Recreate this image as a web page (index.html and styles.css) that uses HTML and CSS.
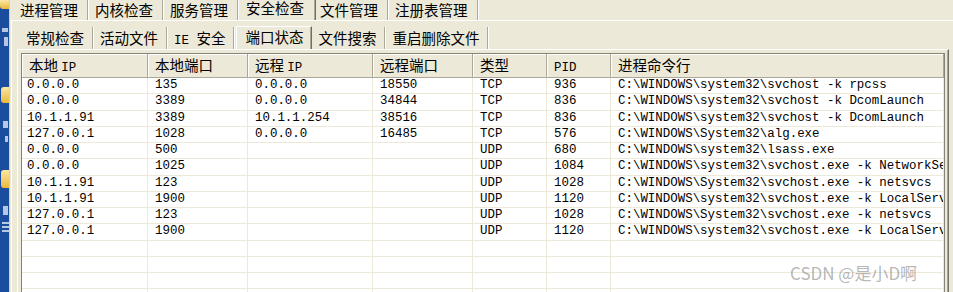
FILE: index.html
```
<!DOCTYPE html>
<html lang="zh-CN">
<head>
<meta charset="utf-8">
<title>端口状态</title>
<link rel="stylesheet" href="styles.css">
</head>
<body>
<div class="screen">
  <div class="desktop">
    <span class="folder f1"></span>
    <span class="mark m1"></span>
    <span class="mark m2"></span>
    <span class="folder f2"></span>
    <span class="mark m3"></span>
    <span class="mark m4"></span>
    <span class="folder f3"></span>
    <span class="mark m5"></span>
    <span class="mark m6"></span>
  </div>
  <div class="window">
    <div class="tabs tabs-main">
      <div class="tab">进程管理</div>
      <div class="tab">内核检查</div>
      <div class="tab">服务管理</div>
      <div class="tab on">安全检查</div>
      <div class="tab">文件管理</div>
      <div class="tab">注册表管理</div>
    </div>
    <div class="panel-outer">
      <div class="tabs tabs-sub">
        <div class="tab">常规检查</div>
        <div class="tab">活动文件</div>
        <div class="tab"><span class="m">IE </span>安全</div>
        <div class="tab on">端口状态</div>
        <div class="tab">文件搜索</div>
        <div class="tab">重启删除文件</div>
      </div>
      <div class="panel-inner">
        <div class="list">
          <div class="row head">
            <div class="hcell">本地 <span class="m">IP</span></div>
            <div class="hcell">本地端口</div>
            <div class="hcell">远程 <span class="m">IP</span></div>
            <div class="hcell">远程端口</div>
            <div class="hcell">类型</div>
            <div class="hcell"><span class="m">PID</span></div>
            <div class="hcell">进程命令行</div>
          </div>
          <div class="body">
            <div class="row"><div class="cell">0.0.0.0</div><div class="cell">135</div><div class="cell">0.0.0.0</div><div class="cell">18550</div><div class="cell">TCP</div><div class="cell">936</div><div class="cell">C:\WINDOWS\system32\svchost -k rpcss</div></div>
            <div class="row"><div class="cell">0.0.0.0</div><div class="cell">3389</div><div class="cell">0.0.0.0</div><div class="cell">34844</div><div class="cell">TCP</div><div class="cell">836</div><div class="cell">C:\WINDOWS\system32\svchost -k DcomLaunch</div></div>
            <div class="row"><div class="cell">10.1.1.91</div><div class="cell">3389</div><div class="cell">10.1.1.254</div><div class="cell">38516</div><div class="cell">TCP</div><div class="cell">836</div><div class="cell">C:\WINDOWS\system32\svchost -k DcomLaunch</div></div>
            <div class="row"><div class="cell">127.0.0.1</div><div class="cell">1028</div><div class="cell">0.0.0.0</div><div class="cell">16485</div><div class="cell">TCP</div><div class="cell">576</div><div class="cell">C:\WINDOWS\System32\alg.exe</div></div>
            <div class="row"><div class="cell">0.0.0.0</div><div class="cell">500</div><div class="cell"></div><div class="cell"></div><div class="cell">UDP</div><div class="cell">680</div><div class="cell">C:\WINDOWS\system32\lsass.exe</div></div>
            <div class="row"><div class="cell">0.0.0.0</div><div class="cell">1025</div><div class="cell"></div><div class="cell"></div><div class="cell">UDP</div><div class="cell">1084</div><div class="cell">C:\WINDOWS\system32\svchost.exe -k NetworkService</div></div>
            <div class="row"><div class="cell">10.1.1.91</div><div class="cell">123</div><div class="cell"></div><div class="cell"></div><div class="cell">UDP</div><div class="cell">1028</div><div class="cell">C:\WINDOWS\System32\svchost.exe -k netsvcs</div></div>
            <div class="row"><div class="cell">10.1.1.91</div><div class="cell">1900</div><div class="cell"></div><div class="cell"></div><div class="cell">UDP</div><div class="cell">1120</div><div class="cell">C:\WINDOWS\system32\svchost.exe -k LocalService</div></div>
            <div class="row"><div class="cell">127.0.0.1</div><div class="cell">123</div><div class="cell"></div><div class="cell"></div><div class="cell">UDP</div><div class="cell">1028</div><div class="cell">C:\WINDOWS\System32\svchost.exe -k netsvcs</div></div>
            <div class="row"><div class="cell">127.0.0.1</div><div class="cell">1900</div><div class="cell"></div><div class="cell"></div><div class="cell">UDP</div><div class="cell">1120</div><div class="cell">C:\WINDOWS\system32\svchost.exe -k LocalService</div></div>
            <div class="row"><div class="cell"></div><div class="cell"></div><div class="cell"></div><div class="cell"></div><div class="cell"></div><div class="cell"></div><div class="cell"></div></div>
            <div class="row"><div class="cell"></div><div class="cell"></div><div class="cell"></div><div class="cell"></div><div class="cell"></div><div class="cell"></div><div class="cell"></div></div>
            <div class="row"><div class="cell"></div><div class="cell"></div><div class="cell"></div><div class="cell"></div><div class="cell"></div><div class="cell"></div><div class="cell"></div></div>
            <div class="row"><div class="cell"></div><div class="cell"></div><div class="cell"></div><div class="cell"></div><div class="cell"></div><div class="cell"></div><div class="cell"></div></div>
          </div>
        </div>
      </div>
    </div>
  </div>
  <div class="watermark">CSDN @是小D啊</div>
</div>
</body>
</html>
```
FILE: styles.css
```
* {
  box-sizing: border-box;
  margin: 0;
  padding: 0;
}

html, body {
  width: 953px;
  height: 292px;
  overflow: hidden;
}

body {
  background: #ece9d8;
  color: #000;
  font-family: "Noto Sans CJK SC", sans-serif;
  font-size: 14.5px;
}

.m {
  font-family: "Liberation Mono", "Noto Sans CJK SC", monospace;
  font-size: 12.45px;
}

.screen {
  position: relative;
  display: flex;
  width: 953px;
  height: 292px;
  overflow: hidden;
}

/* desktop strip on the left */
.desktop {
  flex: none;
  width: 9px;
  height: 292px;
  background: #1b4d9e;
  display: flex;
  flex-direction: column;
  overflow: hidden;
}

.folder {
  display: block;
  width: 9px;
  margin-left: 1px;
  background: linear-gradient(#fbe7a4, #eab73c);
  border-radius: 3px 0 0 3px;
}

.f1 { height: 9px; border-radius: 0 0 0 3px; margin-left: 0; }
.f2 { height: 16px; margin-top: 41px; }
.f3 { height: 18px; margin-top: 28px; }

.mark {
  display: block;
  margin-left: 2px;
  width: 7px;
  background: #dfe6f2;
  opacity: .8;
}

.m1 { height: 4px; margin-top: 19px; width: 6px; }
.m2 { height: 9px; margin-top: 5px; width: 4px; margin-left: 4px; }
.m3 { height: 7px; margin-top: 18px; width: 5px; margin-left: 3px; }
.m4 { height: 6px; margin-top: 8px; width: 3px; margin-left: 5px; }
.m5 { height: 9px; margin-top: 18px; width: 5px; margin-left: 3px; }
.m6 { height: 12px; margin-top: 7px; width: 7px; background: repeating-linear-gradient(#dfe6f2 0 2px, transparent 2px 4px); }

/* window */
.window {
  flex: none;
  width: 960px;
  height: 292px;
  border-left: 1px solid #d4d0c2;
  padding-left: 1px;
  display: flex;
  flex-direction: column;
}

.tabs {
  display: flex;
  flex: none;
}

.tab {
  position: relative;
  white-space: nowrap;
  border-right: 1px solid #aca899;
  box-shadow: 1px 0 0 #fff;
}

.tabs-main {
  height: 20px;
  padding-left: 2px;
}

.tabs-main .tab {
  height: 20px;
  line-height: 20px;
  padding: 0 9px 0 7px;
}

.tabs-main .tab.on {
  z-index: 1;
  background: #ece9d8;
  line-height: 16px;
  padding: 0 11px 0 7px;
  margin-right: -3px;
  border-left: 1px solid #fff;
  border-right: 1px solid #716f64;
  box-shadow: inset -1px 0 0 #aca899;
}

.panel-outer {
  flex: 1;
  display: flex;
  flex-direction: column;
  border-top: 1px solid #fff;
  border-left: 1px solid #fff;
}

.tabs-sub {
  height: 22px;
  margin-top: 6px;
  padding-left: 7px;
}

.tabs-sub .tab {
  height: 22px;
  line-height: 21px;
  padding: 0 8px 0 7px;
}

.tabs-sub .tab.on {
  z-index: 1;
  background: #ece9d8;
  height: 23px;
  margin: -1px -1px 0 2px;
  line-height: 20px;
  padding: 0 8px 0 8px;
  border-top: 1px solid #fff;
  border-left: 1px solid #fff;
  border-right: 1px solid #716f64;
  box-shadow: inset -1px 0 0 #aca899;
}

.panel-inner {
  flex: 1;
  width: 932px;
  margin-left: 5px;
  padding: 3px 3px 0 3px;
  border-top: 1px solid #fff;
  border-left: 1px solid #fff;
  border-right: 1px solid #716f64;
  box-shadow: inset -1px 0 0 #aca899;
  overflow: hidden;
}

/* list view */
.list {
  width: 924px;
  height: 250px;
  background: #fff;
  border: 1px solid #85837a;
  overflow: hidden;
}

.row {
  display: grid;
  grid-template-columns: 126px 100px 125px 100px 74px 64px 333px;
}

.head {
  height: 24px;
  background: #ece9d8;
}

.hcell {
  height: 24px;
  line-height: 22px;
  padding-left: 7px;
  white-space: nowrap;
  border-right: 1px solid #aca899;
  border-bottom: 1px solid #aca899;
  box-shadow: inset 1px 1px 0 #fff;
}

.body .row {
  height: 16.25px;
  border-bottom: 1px solid #ece9d8;
}

.cell {
  font-family: "Liberation Mono", monospace;
  font-size: 12.45px;
  line-height: 15.25px;
  padding-left: 7px;
  white-space: nowrap;
  overflow: hidden;
  border-right: 1px solid #ece9d8;
}

.cell:first-child {
  padding-left: 5px;
}

.watermark {
  position: absolute;
  left: 790px;
  top: 262px;
  font-family: "Noto Sans CJK SC", sans-serif;
  font-size: 17px;
  line-height: 22px;
  color: rgba(120, 120, 120, .55);
  white-space: nowrap;
}
```
